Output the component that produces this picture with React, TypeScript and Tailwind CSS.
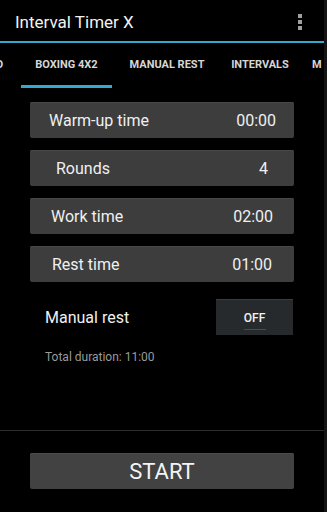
import { Fragment } from 'react';

const rows = [
  { label: 'Warm-up time', value: '00:00', pl: 'pl-[19px]', pr: 'pr-[18px]' },
  { label: 'Rounds', value: '4', pl: 'pl-[26px]', pr: 'pr-[26px]' },
  { label: 'Work time', value: '02:00', pl: 'pl-[21px]', pr: 'pr-[21px]' },
  { label: 'Rest time', value: '01:00', pl: 'pl-[22px]', pr: 'pr-[22px]' },
];

const tabs = ['D', 'BOXING 4X2', 'MANUAL REST', 'INTERVALS', 'M'];

export default function App() {
  return (
    <div
      className="w-[327px] h-[512px] bg-black text-white overflow-hidden flex flex-col relative"
      style={{ fontFamily: 'Roboto, "Liberation Sans", sans-serif' }}
    >
      {/* action bar */}
      <div className="h-[41px] flex items-center justify-between pl-[15px] pr-[25px]">
        <span className="text-[17px] text-[#f2f2f2] mt-[5px]">Interval Timer X</span>
        <div className="flex flex-col gap-[2px] pt-[2px]">
          {[0, 1, 2].map((i) => (
            <div key={i} className="w-[4px] h-[4px] bg-[#a0a0a0]" />
          ))}
        </div>
      </div>
      <div className="h-[2px] bg-[#33a9d0] mr-[3px]" />

      {/* tabs */}
      <div className="h-[46px] flex items-stretch text-[11px] font-bold text-[#d6d6d6] whitespace-nowrap">
        {tabs.map((t, i) => (
          <Fragment key={t}>
            <div
              className={`flex flex-col justify-center relative ${
                i === 0 ? 'ml-[-4px] w-[25px]' : i === 1 ? 'w-[91px] items-center' : i === 2 ? 'w-[110px] items-center' : i === 3 ? 'w-[80px] items-center pr-[4px]' : 'pl-[10px]'
              }`}
            >
              <span className="mt-[-1px]">{t}</span>
              {i === 1 && <div className="absolute left-0 right-0 bottom-[1px] h-[3px] bg-[#33a9d0]" />}
            </div>
          </Fragment>
        ))}
      </div>

      {/* settings */}
      <div className="flex flex-col gap-[12px] pl-[30px] pr-[33px] pt-[13px]">
        {rows.map((r) => (
          <div
            key={r.label}
            className={`h-[36px] bg-[#3d3d3d] rounded-[2px] flex items-center justify-between text-[16px] text-[#f0f0f0] shadow-[inset_0_1px_0_#474747] ${r.pl} ${r.pr}`}
          >
            <span className="mt-[1px]">{r.label}</span>
            <span className="mt-[1px]">{r.value}</span>
          </div>
        ))}
      </div>

      <div className="flex items-center justify-between pl-[45px] pr-[34px] mt-[17px]">
        <span className="text-[16px] text-[#f0f0f0] mt-[2px]">Manual rest</span>
        <div className="w-[77px] h-[36px] bg-[#272a2d] border-t border-[#3a3d40] flex flex-col items-center justify-center">
          <span className="text-[12px] font-medium text-[#f2f2f2] mt-[3px]">OFF</span>
          <div className="w-[22px] h-[1px] bg-[#4a4d50] mt-[2px]" />
        </div>
      </div>

      <div className="pl-[45px] mt-[13px] text-[12px] text-[#9a9a9a]">Total duration: 11:00</div>

      <div className="h-[1px] bg-[#2c2c2c] mt-[64px] mr-[3px]" />

      <div className="pl-[30px] pr-[33px] mt-[22px]">
        <div className="h-[36px] bg-[#424242] rounded-[2px] flex items-center justify-center text-[22px] text-[#f4f4f4] shadow-[inset_0_1px_0_#4c4c4c]">
          START
        </div>
      </div>

      <div className="absolute right-0 top-0 bottom-0 w-[3px] bg-[#141414]" />
    </div>
  );
}
